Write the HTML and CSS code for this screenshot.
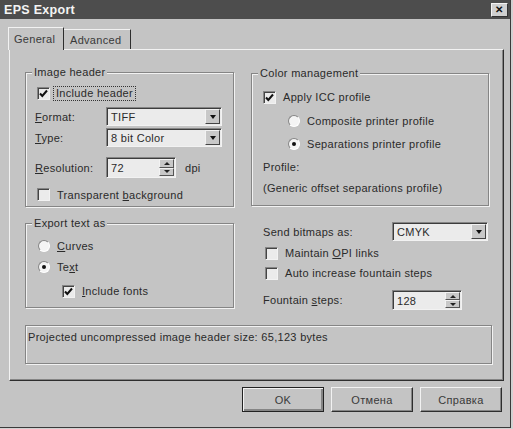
FILE: index.html
```html
<!DOCTYPE html>
<html lang="ru">
<head>
    <meta charset="UTF-8">
    <title>EPS Export</title>
    <link rel="stylesheet" href="styles.css">
</head>
<body>

    <div class="window">
        <div class="titlebar">
            <span class="title">EPS Export</span>
            <span class="close">&#x2715;</span>
        </div>

        <div class="tabs">
            <div class="tab active">General</div>
            <div class="tab">Advanced</div>
        </div>

        <div class="panel">
            <div class="columns">
                <div class="col-left">
                    <div class="group image-header">
                        <span class="legend">Image header</span>
                        <div class="row r-header">
                            <span class="check checked"><svg width="9" height="9" viewBox="0 0 9 9"><path d="M1 4.5 L3.3 7 L8 1.5" fill="none" stroke="#111" stroke-width="2"/></svg></span>
                            <span class="focus">Include header</span>
                        </div>
                        <div class="row r-format">
                            <span class="label"><u>F</u>ormat:</span>
                            <div class="select"><span class="value">TIFF</span><span class="drop"><i></i></span></div>
                        </div>
                        <div class="row r-type">
                            <span class="label"><u>T</u>ype:</span>
                            <div class="select"><span class="value">8 bit Color</span><span class="drop"><i></i></span></div>
                        </div>
                        <div class="row r-res">
                            <span class="label"><u>R</u>esolution:</span>
                            <div class="spin"><span class="value">72</span><span class="spin-btns"><b class="up"><i></i></b><b class="down"><i></i></b></span></div>
                            <span class="unit">dpi</span>
                        </div>
                        <div class="row r-transparent">
                            <span class="check"></span>
                            <span class="text">Transparent <u>b</u>ackground</span>
                        </div>
                    </div>

                    <div class="group export-text">
                        <span class="legend">Export text as</span>
                        <div class="row r-curves">
                            <span class="radio"></span>
                            <span class="text"><u>C</u>urves</span>
                        </div>
                        <div class="row r-text">
                            <span class="radio selected"><span class="dot"></span></span>
                            <span class="text">Te<u>x</u>t</span>
                        </div>
                        <div class="row r-fonts">
                            <span class="check checked"><svg width="9" height="9" viewBox="0 0 9 9"><path d="M1 4.5 L3.3 7 L8 1.5" fill="none" stroke="#111" stroke-width="2"/></svg></span>
                            <span class="text"><u>I</u>nclude fonts</span>
                        </div>
                    </div>
                </div>

                <div class="col-right">
                    <div class="group color-mgmt">
                        <span class="legend">Color management</span>
                        <div class="row r-apply">
                            <span class="check checked"><svg width="9" height="9" viewBox="0 0 9 9"><path d="M1 4.5 L3.3 7 L8 1.5" fill="none" stroke="#111" stroke-width="2"/></svg></span>
                            <span class="text">Apply ICC profile</span>
                        </div>
                        <div class="row r-composite">
                            <span class="radio"></span>
                            <span class="text">Composite printer profile</span>
                        </div>
                        <div class="row r-separations">
                            <span class="radio selected"><span class="dot"></span></span>
                            <span class="text">Separations printer profile</span>
                        </div>
                        <div class="row r-profile">Profile:</div>
                        <div class="row r-generic">(Generic offset separations profile)</div>
                    </div>

                    <div class="bitmaps">
                        <div class="row r-send">
                            <span class="label">Send bitmaps as:</span>
                            <div class="select"><span class="value">CMYK</span><span class="drop"><i></i></span></div>
                        </div>
                        <div class="row r-opi">
                            <span class="check"></span>
                            <span class="text">Maintain <u>O</u>PI links</span>
                        </div>
                        <div class="row r-auto">
                            <span class="check"></span>
                            <span class="text">Auto increase fountain steps</span>
                        </div>
                        <div class="row r-fountain">
                            <span class="label">Fountain <u>s</u>teps:</span>
                            <div class="spin"><span class="value">128</span><span class="spin-btns"><b class="up"><i></i></b><b class="down"><i></i></b></span></div>
                        </div>
                    </div>
                </div>
            </div>

            <div class="status">Projected uncompressed image header size: 65,123 bytes</div>
        </div>

        <div class="buttons">
            <button class="btn default"><span>OK</span></button>
            <button class="btn"><span>Отмена</span></button>
            <button class="btn"><span>Справка</span></button>
        </div>
    </div>

</body>
</html>
```

FILE: styles.css
```css
:root {
    --face: #c4c4c4;
    --field: #ebebeb;
    --light: #f2f2f2;
    --shadow: #858585;
    --dark: #2e2e2e;
    --text: #2a2a2a;
}

body {
    margin: 0;
    background-color: #d2d2d2;
    font-family: "Liberation Sans", Arial, sans-serif;
    font-size: 11px;
    letter-spacing: 0.3px;
    color: var(--text);
}

.window {
    width: 510px;
    height: 427px;
    background-color: var(--face);
    border-right: 1px solid #3a3a3a;
    border-bottom: 1px solid #3a3a3a;
}

/* title bar */
.titlebar {
    height: 19px;
    background-color: #4d4d4d;
    display: flex;
    align-items: center;
    justify-content: space-between;
    padding: 0 2px 0 4px;
}

.title {
    color: #f4f4f4;
    font-weight: bold;
    font-size: 12.5px;
    letter-spacing: 0.3px;
}

.close {
    width: 17px;
    height: 14px;
    background-color: #d0d0d0;
    border: 1px solid;
    border-color: #f4f4f4 #333 #333 #f4f4f4;
    box-sizing: border-box;
    display: flex;
    align-items: center;
    justify-content: center;
    font-size: 10px;
    font-weight: bold;
    color: #111;
}

/* tabs */
.tabs {
    height: 30px;
    display: flex;
    align-items: flex-end;
    padding-left: 8px;
}

.tab {
    width: 67px;
    height: 20px;
    box-sizing: border-box;
    padding: 0 6px;
    display: flex;
    align-items: center;
    border-top: 1px solid var(--light);
    border-right: 1px solid var(--dark);
    color: #3a3a3a;
}

.tab.active {
    width: 56px;
    height: 23px;
    margin-bottom: -1px;
    border-left: 1px solid var(--light);
    background-color: var(--face);
    position: relative;
    z-index: 1;
    padding: 0 0 1px 5px;
}

/* main panel */
.panel {
    margin-left: 9px;
    width: 495px;
    height: 332px;
    box-sizing: border-box;
    border: 1px solid;
    border-color: var(--light) var(--dark) var(--dark) var(--light);
    box-shadow: inset -1px -1px 0 var(--shadow);
    padding: 22px 0 0 15px;
}

.columns {
    display: flex;
    gap: 17px;
}

.col-left {
    width: 209px;
}

.col-right {
    width: 238px;
    padding-top: 1px;
}

.group {
    position: relative;
    box-sizing: border-box;
    border: 1px solid var(--shadow);
    box-shadow: inset 1px 1px 0 var(--light), 1px 1px 0 var(--light);
    display: flex;
    flex-direction: column;
}

.legend {
    position: absolute;
    top: -8px;
    left: 6px;
    padding: 0 2px;
    background-color: var(--face);
    line-height: 14px;
}

.row {
    display: flex;
    align-items: center;
    height: 18px;
}

.label {
    flex: none;
}

.text {
    margin-left: 7px;
}

/* image header */
.image-header {
    height: 135px;
    padding: 11px 0 0 9px;
}

.image-header .label {
    width: 71px;
}

.r-header .check,
.r-transparent .check {
    margin-left: 2px;
}

.focus {
    margin-left: 3px;
    padding: 0 2px;
    border: 1px dotted #333;
    line-height: 13px;
}

.r-format { margin-top: 5px; height: 19px; }
.r-type { margin-top: 2px; height: 19px; }
.r-res { margin-top: 10px; height: 21px; }
.r-transparent { margin-top: 8px; height: 17px; }

.image-header .select {
    width: 116px;
}

.image-header .spin {
    width: 70px;
}

.unit {
    margin-left: 9px;
}

/* export text */
.export-text {
    margin-top: 16px;
    height: 85px;
    padding: 13px 0 0 12px;
}

.r-text { margin-top: 3px; }
.r-fonts { margin-top: 6px; padding-left: 24px; }

/* color management */
.color-mgmt {
    height: 133px;
    padding: 14px 0 0 11px;
}

.r-composite { margin-top: 6px; padding-left: 25px; }
.r-separations { margin-top: 5px; padding-left: 25px; }
.r-profile { margin-top: 5px; }
.r-generic { margin-top: 3px; }

/* bitmaps */
.bitmaps {
    padding-left: 12px;
    display: flex;
    flex-direction: column;
}

.bitmaps .label {
    width: 129px;
}

.r-send { margin-top: 16px; height: 19px; }
.r-opi { margin-top: 3px; padding-left: 2px; }
.r-auto { margin-top: 2px; padding-left: 2px; }
.r-fountain { margin-top: 8px; height: 20px; }

.bitmaps .select {
    width: 96px;
}

.bitmaps .spin {
    width: 70px;
}

/* controls */
.check {
    flex: none;
    width: 13px;
    height: 13px;
    box-sizing: border-box;
    background-color: var(--field);
    border: 1px solid;
    border-color: var(--shadow) var(--light) var(--light) var(--shadow);
    box-shadow: inset 1px 1px 0 #444;
    display: flex;
    align-items: center;
    justify-content: center;
}

.radio {
    flex: none;
    width: 12px;
    height: 12px;
    box-sizing: border-box;
    border-radius: 50%;
    background-color: #f4f4f4;
    border: 1px solid;
    border-color: var(--shadow) #fff #fff var(--shadow);
    display: flex;
    align-items: center;
    justify-content: center;
}

.dot {
    width: 4px;
    height: 4px;
    border-radius: 50%;
    background-color: #111;
}

.select,
.spin {
    height: 100%;
    box-sizing: border-box;
    display: flex;
    background-color: var(--field);
    border: 1px solid;
    border-color: var(--shadow) var(--light) var(--light) var(--shadow);
    box-shadow: inset 1px 1px 0 #3c3c3c;
}

.value {
    flex: 1;
    display: flex;
    align-items: center;
    padding-left: 4px;
    padding-top: 1px;
}

.drop {
    width: 15px;
    margin: 1px 1px 1px 0;
    background-color: #c8c8c8;
    border: 1px solid;
    border-color: var(--light) #444 #444 var(--light);
    box-sizing: border-box;
    display: flex;
    align-items: center;
    justify-content: center;
}

.drop i {
    border-left: 3.5px solid transparent;
    border-right: 3.5px solid transparent;
    border-top: 4px solid #111;
}

.spin-btns {
    width: 15px;
    margin: 1px 1px 1px 0;
    display: flex;
    flex-direction: column;
}

.spin-btns b {
    flex: 1;
    background-color: #c8c8c8;
    border: 1px solid;
    border-color: var(--light) #555 #555 var(--light);
    display: flex;
    align-items: center;
    justify-content: center;
}

.spin-btns .up i {
    border-left: 3px solid transparent;
    border-right: 3px solid transparent;
    border-bottom: 3px solid #222;
}

.spin-btns .down i {
    border-left: 3px solid transparent;
    border-right: 3px solid transparent;
    border-top: 3px solid #222;
}

/* status box */
.status {
    margin-top: 15px;
    width: 467px;
    height: 39px;
    box-sizing: border-box;
    border: 1px solid var(--shadow);
    box-shadow: inset 1px 1px 0 var(--light), 1px 1px 0 var(--light);
    padding: 4px 0 0 2px;
    line-height: 14px;
}

/* bottom buttons */
.buttons {
    margin-top: 6px;
    display: flex;
    justify-content: flex-end;
    gap: 7px;
    padding-right: 8px;
}

.btn {
    width: 82px;
    height: 25px;
    padding: 0;
    font-family: inherit;
    font-size: 11px;
    letter-spacing: 0.3px;
    color: #3a3a3a;
    background-color: var(--face);
    border: 1px solid;
    border-color: var(--light) var(--dark) var(--dark) var(--light);
    box-shadow: inset -1px -1px 0 var(--shadow);
}

.btn.default {
    border: 1px solid #222;
    box-shadow: inset 1px 1px 0 var(--light), inset -2px -2px 0 var(--shadow);
}
```
